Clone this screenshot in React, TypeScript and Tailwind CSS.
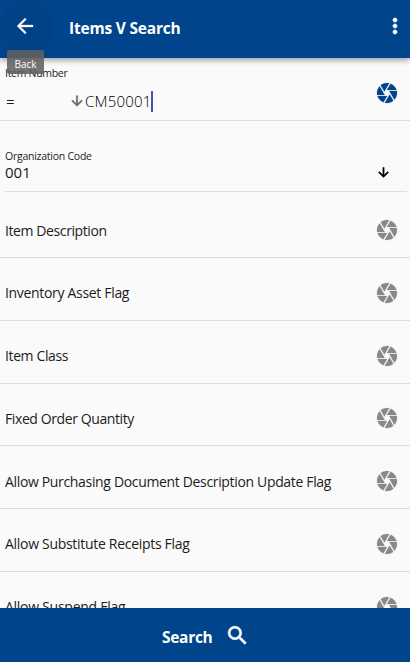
import React from "react";

const ARROW_BACK = "M20 11H7.83l5.59-5.59L12 4l-8 8 8 8 1.41-1.41L7.83 13H20v-2z";
const ARROW_DOWN = "M20 12l-1.41-1.41L13 16.17V4h-2v12.17l-5.58-5.59L4 12l8 8 8-8z";
const MORE =
  "M12 8c1.1 0 2-.9 2-2s-.9-2-2-2-2 .9-2 2 .9 2 2 2zm0 2c-1.1 0-2 .9-2 2s.9 2 2 2 2-.9 2-2-.9-2-2-2zm0 6c-1.1 0-2 .9-2 2s.9 2 2 2 2-.9 2-2-.9-2-2-2z";
const SEARCH =
  "M15.5 14h-.79l-.28-.27A6.471 6.471 0 0 0 16 9.5 6.5 6.5 0 1 0 9.5 16c1.61 0 3.09-.59 4.23-1.57l.27.28v.79l5 4.99L20.49 19l-4.99-5zm-6 0C7.01 14 5 11.99 5 9.5S7.01 5 9.5 5 14 7.01 14 9.5 11.99 14 9.5 14z";
const CAMERA =
  "M9.4 10.5l4.77-8.26C13.47 2.09 12.75 2 12 2c-2.4 0-4.6.85-6.32 2.25l3.66 6.35.06-.1zM21.54 9c-.92-2.92-3.15-5.26-6-6.34L11.88 9h9.66zm.26 1h-7.49l.29.5 4.76 8.25C21 16.97 22 14.61 22 12c0-.69-.07-1.35-.2-2zM8.54 12l-3.9-6.75C3.01 7.03 2 9.39 2 12c0 .69.07 1.35.2 2h7.49l-1.15-2zm-6.08 3c.92 2.92 3.15 5.26 6 6.34L12.12 15H2.46zm11.27 0l-3.9 6.76c.7.15 1.42.24 2.17.24 2.4 0 4.6-.85 6.32-2.25l-3.66-6.35-.93 1.6z";

function Glyph({ path, size, weight, className }: { path: string; size: number; weight: number; className?: string }) {
  return (
    <svg
      viewBox="0 0 24 24"
      width={size}
      height={size}
      fill="currentColor"
      stroke="currentColor"
      strokeWidth={weight}
      className={`shrink-0 ${className ?? ""}`}
    >
      <path d={path} />
    </svg>
  );
}

const fields: { label: string; spacing: string }[] = [
  { label: "Item Description", spacing: "tracking-[-0.4px]" },
  { label: "Inventory Asset Flag", spacing: "tracking-[-0.32px]" },
  { label: "Item Class", spacing: "tracking-[-0.38px]" },
  { label: "Fixed Order Quantity", spacing: "tracking-[-0.4px]" },
  { label: "Allow Purchasing Document Description Update Flag", spacing: "tracking-[-0.34px]" },
  { label: "Allow Substitute Receipts Flag", spacing: "tracking-[-0.3px]" },
  { label: "Allow Suspend Flag", spacing: "tracking-[-0.27px]" },
];

function Header() {
  return (
    <header className="relative z-10 flex h-[58px] shrink-0 items-center bg-[#00458b] pb-1 text-white shadow-[0_2px_6px_rgba(0,0,0,0.4)]">
      <div className="absolute top-0 left-0 h-[54px] w-[54px] rounded-full bg-black/4" />
      <button className="-mt-0.5 ml-[13px] flex size-6 items-center justify-center" aria-label="Back">
        <Glyph path={ARROW_BACK} size={24} weight={0.3} />
      </button>
      <h1 className="ml-8 pt-px text-[15.5px] leading-6 font-bold tracking-[-0.2px] whitespace-nowrap">Items V Search</h1>
      <button className="-mt-0.5 mr-[3px] ml-auto" aria-label="More">
        <Glyph path={MORE} size={24} weight={0.7} />
      </button>
      <span className="absolute top-[50px] left-[7px] flex h-[24px] w-[37px] items-center justify-center rounded-[2px] bg-[#616161]/88 pt-1 text-[10px] text-white">
        Back
      </span>
    </header>
  );
}

export default function App() {
  return (
    <div className="flex h-[662px] w-[410px] flex-col overflow-hidden bg-[#fafafa] font-['Open_Sans','Noto_Sans',sans-serif] text-[#1c1c1c]">
      <Header />
      <main className="min-h-0 flex-1 overflow-hidden">
        <section className="flex h-[63px] border-b border-[#dedede] pt-[7px] pl-[5px]">
          <div className="flex-1">
            <div className="text-[10.5px] leading-4 tracking-[-0.3px]">Item Number</div>
            <div className="mt-[10px] flex h-5 items-center text-[15px]">
              <span className="w-[64px] pl-px">=</span>
              <Glyph path={ARROW_DOWN} size={16} weight={0.8} className="text-[#666]" />
              <span className="font-light tracking-[0.2px] text-black">CM50001</span>
              <span className="h-[21px] w-[2px] bg-[#4350af]" />
            </div>
          </div>
          <Glyph path={CAMERA} size={24} weight={0.2} className="mt-4 mr-[11px] text-[#00458b]" />
        </section>
        <section className="mr-[3px] ml-[5px] flex h-[71px] border-b border-[#dedede] pt-[27px]">
          <div className="flex-1">
            <div className="text-[10.5px] leading-4 tracking-[-0.25px]">Organization Code</div>
            <div className="text-[15px] leading-[16px]">001</div>
          </div>
          <Glyph path={ARROW_DOWN} size={15} weight={0.8} className="mt-[17px] mr-[16px] text-black" />
        </section>
        <div className="h-[3.3px]" />
        {fields.map((field) => (
          <div key={field.label} className="flex h-[62.75px] items-center border-b border-[#dedede] pt-[8px] pr-[11px] pl-[5px]">
            <span className={`flex-1 pt-px text-[14px] leading-5 whitespace-nowrap ${field.spacing}`}>{field.label}</span>
            <Glyph path={CAMERA} size={24} weight={0.2} className="text-[#888]" />
          </div>
        ))}
      </main>
      <footer className="flex h-[54px] shrink-0 items-center bg-[#00458b] pl-[162px] text-white">
        <span className="pt-1 text-[15.5px] leading-6 font-bold tracking-[-0.3px]">Search</span>
        <Glyph path={SEARCH} size={25} weight={0.6} className="ml-[13px]" />
      </footer>
    </div>
  );
}
